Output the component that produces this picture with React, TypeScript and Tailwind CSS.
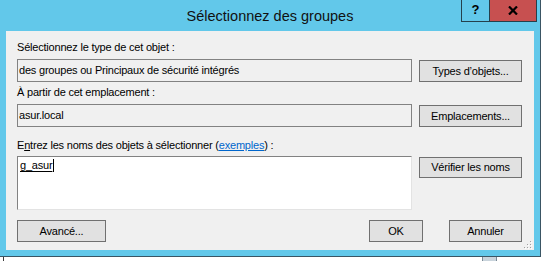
import React from "react";

function Btn({
  children,
  className = "",
}: {
  children: React.ReactNode;
  className?: string;
}) {
  return (
    <div
      className={
        "flex items-center justify-center border border-[#707070] bg-[#e1e1e1] text-[11px] leading-[15px] tracking-[-0.2px] text-black " +
        className
      }
    >
      {children}
    </div>
  );
}

function Grip() {
  const dots = [
    [6, 0],
    [3, 3],
    [6, 3],
    [0, 6],
    [3, 6],
    [6, 6],
  ];
  return (
    <svg width="8" height="8" viewBox="0 0 8 8">
      {dots.map(([x, y], i) => (
        <g key={i}>
          <rect x={x + 1} y={y + 1} width="1" height="1" fill="#ffffff" />
          <rect x={x} y={y} width="1" height="1" fill="#a0a0a0" />
        </g>
      ))}
    </svg>
  );
}

export default function App() {
  return (
    <div className="flex h-[261px] w-[544px] flex-col overflow-hidden bg-white font-['Liberation_Sans',Arial,sans-serif]">
      <div className="flex">
        <div className="flex h-[257px] w-[541px] flex-col border-r border-b border-[#3a5564] bg-[#62c8ea]">
          {/* title bar */}
          <div className="flex h-[31px]">
            <div className="w-[79px]" />
            <div className="flex-1 pt-[7px] text-center text-[14.5px] leading-[18px] text-[#111]">
              Sélectionnez des groupes
            </div>
            <div className="mr-[3px] flex h-[22px]">
              <div className="flex w-[29px] items-center justify-center border-x border-b border-[#24404c] pb-[1px] text-[13px] font-bold text-black">
                ?
              </div>
              <div className="flex w-[47px] items-center justify-center border-r border-b border-[#24404c] bg-[#c75050]">
                <svg width="10" height="9" viewBox="0 0 10 9">
                  <path
                    d="M1 0.5 L9 8.5 M9 0.5 L1 8.5"
                    stroke="#000"
                    strokeWidth="2.2"
                  />
                </svg>
              </div>
            </div>
          </div>

          {/* body */}
          <div className="relative ml-[6px] flex h-[219px] w-[528px] flex-col bg-[#f0f0f0] pl-[11px] pt-[9px] text-[11px] leading-[15px] tracking-[-0.2px] text-black">
            <div>Sélectionnez le type de cet objet :</div>
            <div className="mt-[4px] flex gap-[7px]">
              <div className="flex h-[23px] w-[395px] items-center border border-[#828282] pl-[1px]">
                des groupes ou Principaux de sécurité intégrés
              </div>
              <Btn className="mt-[1px] h-[22px] w-[103px]">Types d’objets...</Btn>
            </div>

            <div className="mt-[3px]">À partir de cet emplacement :</div>
            <div className="mt-[4px] flex gap-[7px]">
              <div className="flex h-[23px] w-[395px] items-center border border-[#828282] pl-[1px]">
                asur.local
              </div>
              <Btn className="mt-[1px] h-[22px] w-[103px]">Emplacements...</Btn>
            </div>

            <div className="mt-[11px]">
              E<span className="underline">n</span>trez les noms des objets à sélectionner (
              <span className="text-[#0066cc] underline">exemples</span>) :
            </div>
            <div className="mt-[3px] flex gap-[7px]">
              <div className="h-[54px] w-[395px] border-t border-l border-r border-b border-t-[#828282] border-l-[#828282] border-r-[#e3e3e3] border-b-[#e3e3e3] bg-white pl-[2px] pt-[1px]">
                <span className="inline-flex items-center">
                  <span className="underline decoration-black underline-offset-[2px]">g_asur</span>
                  <span className="ml-[1px] inline-block h-[13px] w-[1px] bg-black" />
                </span>
              </div>
              <Btn className="mt-[1px] h-[21px] w-[103px]">Vérifier les noms</Btn>
            </div>

            <div className="mt-[10px] flex">
              <Btn className="h-[22px] w-[89px]">Avancé...</Btn>
              <div className="flex-1" />
              <Btn className="h-[22px] w-[54px] border-[#3c7fb1]">OK</Btn>
              <Btn className="ml-[26px] mr-[12px] h-[22px] w-[73px]">Annuler</Btn>
            </div>

            <div className="absolute right-[2px] bottom-[1px]">
              <Grip />
            </div>
          </div>
        </div>
        <div className="flex-1 bg-white" />
      </div>
      <div className="flex flex-1">
        <div className="ml-[3px] w-[1px] bg-[#3a3a3a]" />
        <div className="ml-[478px] w-[15px] border-x border-[#7a8a96] bg-[#c9d4dc]" />
      </div>
    </div>
  );
}
